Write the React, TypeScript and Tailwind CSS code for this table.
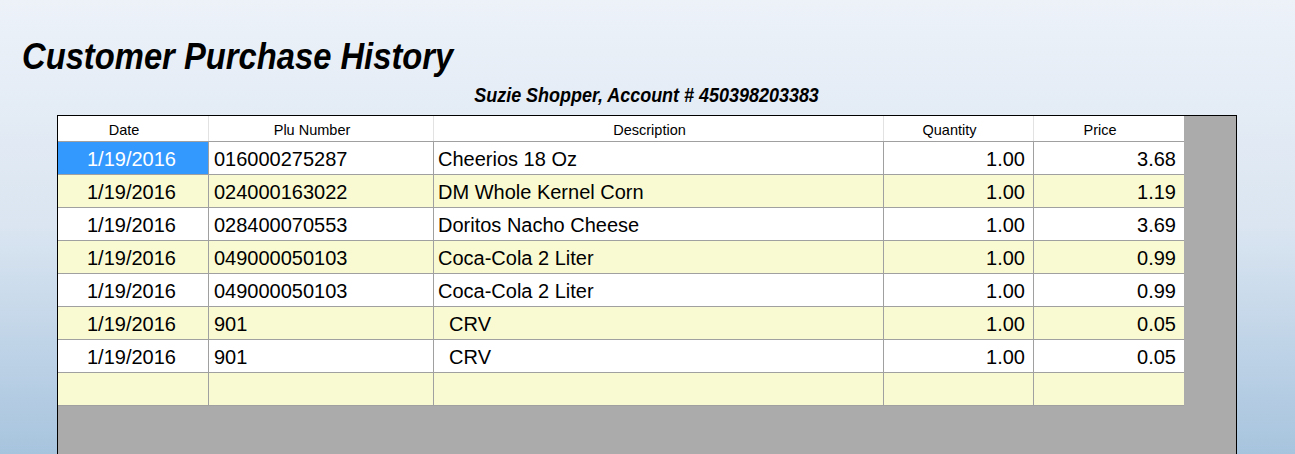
const rows = [
  { date: '1/19/2016', plu: '016000275287', desc: 'Cheerios 18 Oz', qty: '1.00', price: '3.68' },
  { date: '1/19/2016', plu: '024000163022', desc: 'DM Whole Kernel Corn', qty: '1.00', price: '1.19' },
  { date: '1/19/2016', plu: '028400070553', desc: 'Doritos Nacho Cheese', qty: '1.00', price: '3.69' },
  { date: '1/19/2016', plu: '049000050103', desc: 'Coca-Cola 2 Liter', qty: '1.00', price: '0.99' },
  { date: '1/19/2016', plu: '049000050103', desc: 'Coca-Cola 2 Liter', qty: '1.00', price: '0.99' },
  { date: '1/19/2016', plu: '901', desc: '  CRV', qty: '1.00', price: '0.05' },
  { date: '1/19/2016', plu: '901', desc: '  CRV', qty: '1.00', price: '0.05' },
  { date: '', plu: '', desc: '', qty: '', price: '' },
];

const cols = 'grid grid-cols-[151px_225px_450px_150px_150px] w-[1126px]';

export default function App() {
  return (
    <div className="h-[454px] overflow-hidden flex flex-col bg-gradient-to-b from-[#edf2f9] via-[#dae5f1] to-[#a7c4de] font-['Liberation_Sans',Arial,sans-serif] text-black">
      <div className="h-[38px]" />
      <h1 className="ml-[22px] h-[46px] text-[37px] leading-none font-bold italic">
        <span className="inline-block origin-left scale-x-[0.885] whitespace-nowrap">Customer Purchase History</span>
      </h1>
      <div className="ml-[57px] w-[1180px] h-[31px] flex justify-center text-[21px] leading-none font-bold italic">
        <span className="inline-block origin-center scale-x-[0.855] whitespace-nowrap">Suzie Shopper, Account # 450398203383</span>
      </div>
      <div className="ml-[57px] w-[1180px] flex-1 border border-b-0 border-black bg-[#ababab]">
        <div className={`${cols} bg-white text-[14.5px] border-b border-[#a0a0a0]`}>
          {['Date', 'Plu Number', 'Description', 'Quantity', 'Price'].map((h, i) => (
            <div
              key={h}
              className={`h-[25px] pt-[3px] pr-[18px] leading-[22px] text-center ${i < 4 ? 'border-r border-[#e2e2e2]' : ''}`}
            >
              {h}
            </div>
          ))}
        </div>
        {rows.map((r, i) => (
          <div
            key={i}
            className={`${cols} text-[20px] border-b border-[#a0a0a0] ${i % 2 === 1 ? 'bg-[#fafad2]' : 'bg-white'}`}
          >
            <div className={`h-[32px] leading-[34px] pr-[3px] text-center border-r border-[#a0a0a0] ${i === 0 ? 'bg-[#3399ff] text-white' : ''}`}>
              {r.date}
            </div>
            <div className="h-[32px] leading-[34px] pl-[5px] border-r border-[#a0a0a0]">{r.plu}</div>
            <div className="h-[32px] leading-[34px] pl-[4px] whitespace-pre border-r border-[#a0a0a0]">{r.desc}</div>
            <div className="h-[32px] leading-[34px] pr-[8px] text-right border-r border-[#a0a0a0]">{r.qty}</div>
            <div className="h-[32px] leading-[34px] pr-[8px] text-right">{r.price}</div>
          </div>
        ))}
      </div>
    </div>
  );
}
